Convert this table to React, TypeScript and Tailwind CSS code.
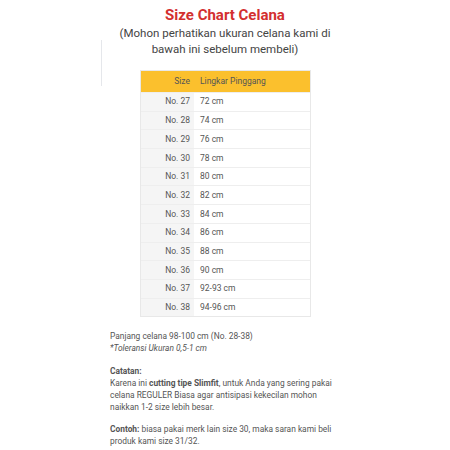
const rows = [
  ["No. 27", "72 cm"],
  ["No. 28", "74 cm"],
  ["No. 29", "76 cm"],
  ["No. 30", "78 cm"],
  ["No. 31", "80 cm"],
  ["No. 32", "82 cm"],
  ["No. 33", "84 cm"],
  ["No. 34", "86 cm"],
  ["No. 35", "88 cm"],
  ["No. 36", "90 cm"],
  ["No. 37", "92-93 cm"],
  ["No. 38", "94-96 cm"],
];

export default function App() {
  return (
    <div className="w-[450px] h-[450px] bg-white overflow-hidden font-['Roboto',sans-serif] relative">
      <div className="absolute left-[101px] top-[40px] w-px h-[46px] bg-gray-200" />
      <div className="pt-[5px] text-center">
        <h1 className="text-[15px] leading-[20px] font-bold text-[#d32f2f]">Size Chart Celana</h1>
        <p className="text-[11.5px] leading-[16px] text-[#444]">
          (Mohon perhatikan ukuran celana kami di
          <br />
          bawah ini sebelum membeli)
        </p>
      </div>

      <div className="ml-[140px] mt-[13px] w-[171px] border border-[#e8e8e8] text-[8.5px] text-[#555]">
        <div className="flex h-[21px] bg-[#fbc02d] items-center">
          <div className="w-[53px] text-right pr-[4px]">Size</div>
          <div className="pl-[6px]">Lingkar Pinggang</div>
        </div>
        {rows.map(([size, waist]) => (
          <div key={size} className="flex h-[18.7px] border-t border-[#eee]">
            <div className="w-[53px] bg-[#f5f5f5] text-right pr-[4px] flex items-center justify-end">{size}</div>
            <div className="pl-[6px] flex items-center">{waist}</div>
          </div>
        ))}
      </div>

      <div className="ml-[110px] mt-[13px] text-[8.4px] leading-[12px] text-[#555]">
        <p>Panjang celana 98-100 cm (No. 28-38)</p>
        <p className="italic">*Toleransi Ukuran 0,5-1 cm</p>
        <p className="mt-[11px] font-bold">Catatan:</p>
        <p>
          Karena ini <b>cutting tipe Slimfit</b>, untuk Anda yang sering pakai
          <br />
          celana REGULER Biasa agar antisipasi kekecilan mohon
          <br />
          naikkan 1-2 size lebih besar.
        </p>
        <p className="mt-[10px]">
          <b>Contoh:</b> biasa pakai merk lain size 30, maka saran kami beli
          <br />
          produk kami size 31/32.
        </p>
      </div>
    </div>
  );
}
